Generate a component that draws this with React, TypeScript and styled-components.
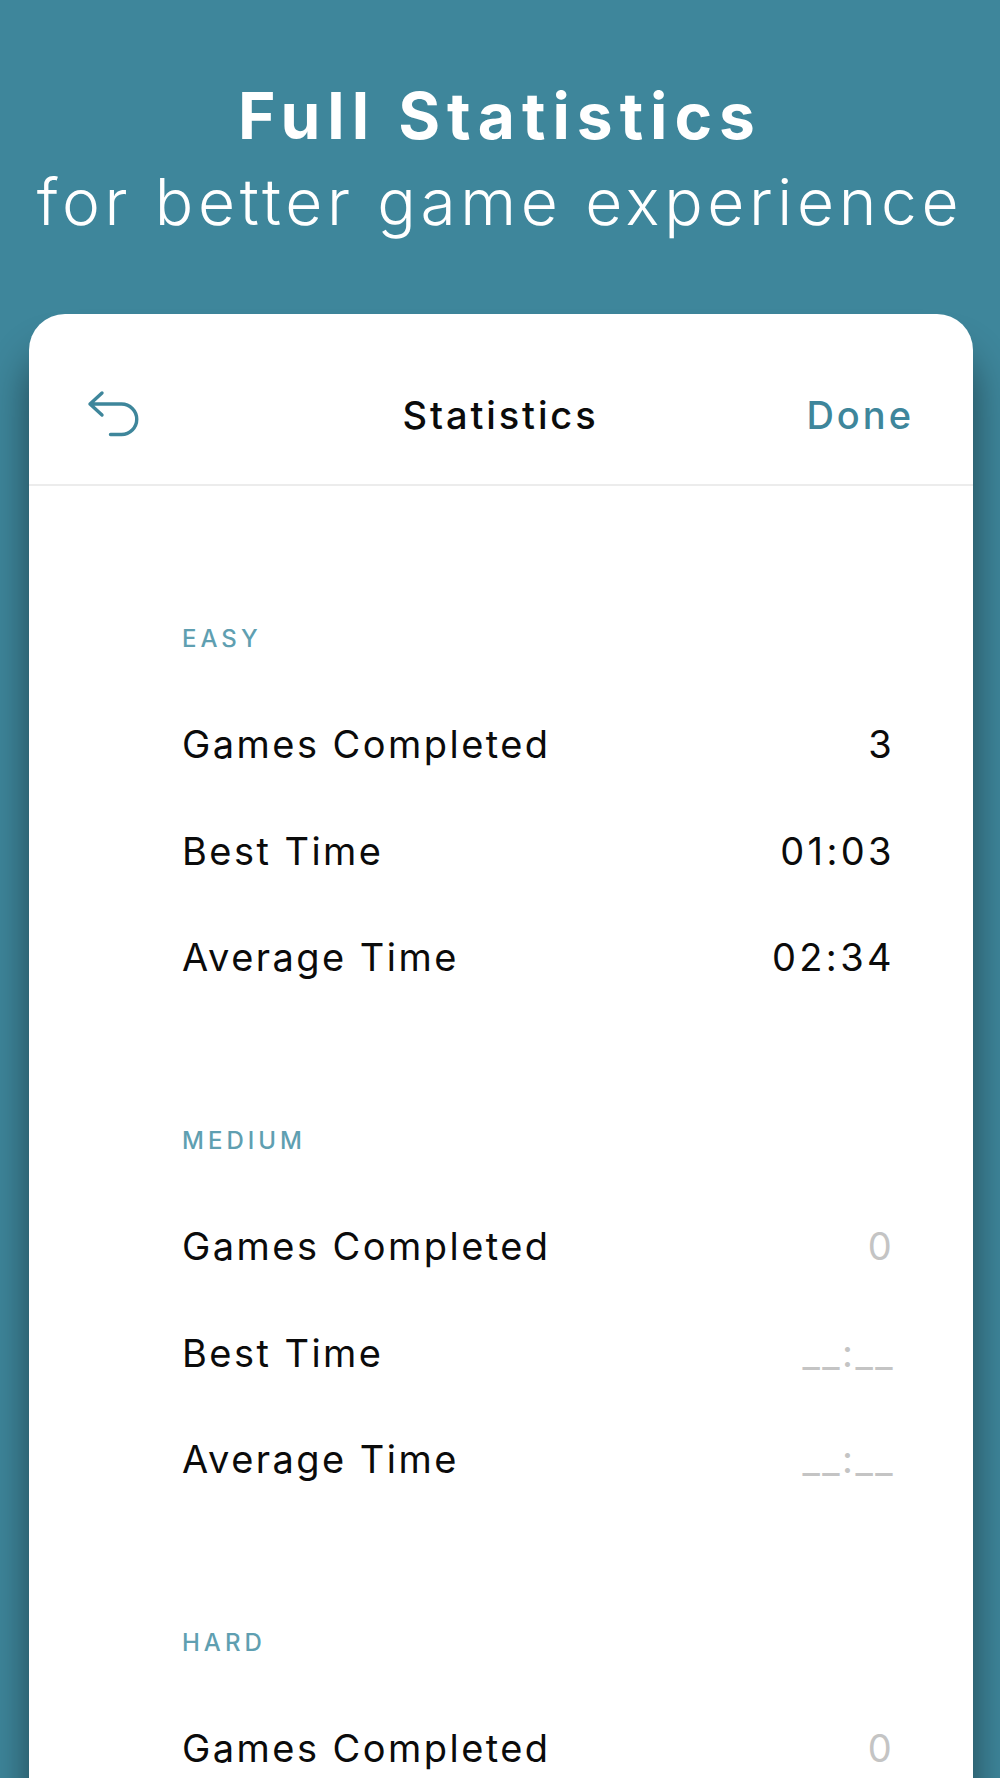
import React from 'react';
import styled, { createGlobalStyle } from 'styled-components';

const teal = '#3e869b';

const GlobalStyle = createGlobalStyle`
  html, body {
    margin: 0;
    padding: 0;
    background: ${teal};
  }
  body {
    font-family: Inter, 'Liberation Sans', sans-serif;
  }
`;

const Page = styled.div`
  height: 1778px;
  overflow: hidden;
  background: ${teal};
  display: flex;
  flex-direction: column;
`;

const Hero = styled.header`
  flex: none;
  height: 314px;
  padding-top: 79px;
  box-sizing: border-box;
  text-align: center;
  color: #fff;
`;

const HeroTitle = styled.h1`
  margin: 0;
  font-size: 64px;
  line-height: 74px;
  font-weight: 700;
  letter-spacing: 7px;
`;

const HeroSubtitle = styled.p`
  margin: 12px 0 0;
  font-size: 64px;
  line-height: 74px;
  font-weight: 300;
  letter-spacing: 4.65px;
  white-space: nowrap;
`;

const Card = styled.main`
  flex: none;
  margin: 0 27px 0 29px;
  background: #fff;
  border-radius: 36px 36px 0 0;
  box-shadow: 0 40px 40px rgba(0, 0, 0, 0.48);
`;

const NavBar = styled.div`
  height: 172px;
  box-sizing: border-box;
  padding: 33px 59px 1px 58px;
  display: grid;
  grid-template-columns: 1fr auto 1fr;
  align-items: center;
  border-bottom: 2px solid #ececec;
`;

const BackIcon = styled.svg`
  width: 54px;
  height: 50px;
  fill: none;
  stroke: ${teal};
  stroke-width: 3.4;
  stroke-linecap: round;
  stroke-linejoin: round;
`;

const NavTitle = styled.div`
  font-size: 38px;
  font-weight: 500;
  letter-spacing: 2.9px;
  color: #0b0b0b;
`;

const DoneButton = styled.div`
  font-size: 38px;
  font-weight: 500;
  letter-spacing: 3px;
  color: ${teal};
  justify-self: end;
`;

const Content = styled.div`
  padding: 138px 78px 0 153px;
`;

const Section = styled.section`
  margin-bottom: 115px;
`;

const SectionLabel = styled.div`
  font-size: 24px;
  line-height: 30px;
  font-weight: 500;
  letter-spacing: 4px;
  color: #5f9fb1;
  margin-bottom: 37px;
`;

const Row = styled.div`
  height: 106.6px;
  display: flex;
  align-items: center;
  justify-content: space-between;
  font-size: 38px;
  letter-spacing: 2.45px;
  color: #0b0b0b;
`;

const Value = styled.span<{ $muted: boolean }>`
  color: ${(p) => (p.$muted ? '#c4c4c4' : '#0b0b0b')};
  letter-spacing: 3.4px;
`;

const BlankTime = styled.span`
  color: #c4c4c4;
  font-feature-settings: 'calt' 0;
`;

interface Stats {
  label: string;
  completed: number;
  best: string | null;
  average: string | null;
}

const STATS: Stats[] = [
  { label: 'EASY', completed: 3, best: '01:03', average: '02:34' },
  { label: 'MEDIUM', completed: 0, best: null, average: null },
  { label: 'HARD', completed: 0, best: null, average: null },
];

const StatRow = ({ name, value }: { name: string; value: string | null }) => (
  <Row>
    <span>{name}</span>
    {value === null ? <BlankTime>__:__</BlankTime> : <Value $muted={value === '0'}>{value}</Value>}
  </Row>
);

const App = () => (
  <Page>
    <GlobalStyle />
    <Hero>
      <HeroTitle>Full Statistics</HeroTitle>
      <HeroSubtitle>for better game experience</HeroSubtitle>
    </Hero>
    <Card>
      <NavBar>
        <BackIcon viewBox="0 0 54 50">
          <path d="M15 3 L3 14 L15 25 M3 14 H34.5 A15.25 15.25 0 0 1 34.5 44.5 H23.5" />
        </BackIcon>
        <NavTitle>Statistics</NavTitle>
        <DoneButton>Done</DoneButton>
      </NavBar>
      <Content>
        {STATS.map((s) => (
          <Section key={s.label}>
            <SectionLabel>{s.label}</SectionLabel>
            <StatRow name="Games Completed" value={String(s.completed)} />
            <StatRow name="Best Time" value={s.best} />
            <StatRow name="Average Time" value={s.average} />
          </Section>
        ))}
      </Content>
    </Card>
  </Page>
);

export default App;
